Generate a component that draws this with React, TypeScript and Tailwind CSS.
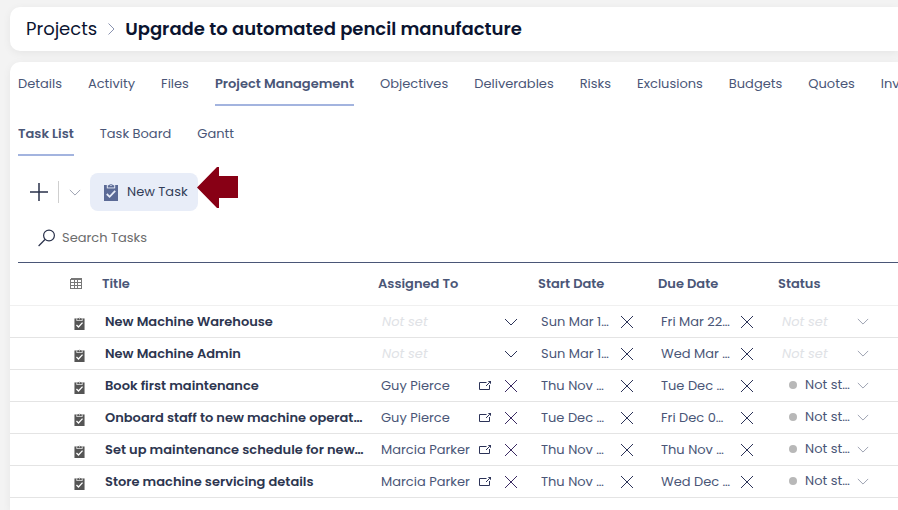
import React from "react";

type IconProps = { className?: string };

const ChevronDown = ({ className = "" }: IconProps) => (
  <svg viewBox="0 0 14 8" className={className} fill="none" stroke="currentColor" aria-hidden="true">
    <path d="M1 1l6 6 6-6" />
  </svg>
);

const Cross = ({ className = "" }: IconProps) => (
  <svg viewBox="0 0 14 14" className={className} fill="none" stroke="currentColor" aria-hidden="true">
    <path d="M1 1l12 12M13 1L1 13" />
  </svg>
);

const OpenOut = ({ className = "" }: IconProps) => (
  <svg viewBox="0 0 14 12" className={className} fill="none" stroke="currentColor" aria-hidden="true">
    <path d="M8.500 2.500h-7v7h10V5" />
    <path d="M8 6l3.500-3.500" />
    <path d="M9.800 1H13v3.200z" fill="currentColor" stroke="none" />
  </svg>
);

const Clipboard = ({ className = "", paper = "white" }: IconProps & { paper?: string }) => (
  <svg viewBox="0 0 14 18" className={className} aria-hidden="true">
    <path fill="currentColor" d="M0 2h14v16H0z" />
    <path fill={paper} d="M2.800 2h8.400v3.400H2.800z" />
    <path fill="currentColor" fillRule="evenodd" d="M3.800 4.500V2.200h1.400a1.900 1.900 0 0 1 3.600 0h1.400v2.300zM7 1.500a.8.8 0 1 0 0 1.600.8.8 0 0 0 0-1.600z" />
    <path fill="none" stroke={paper} strokeWidth="1.800" d="M2.800 11l2.800 2.800 5.600-6" />
  </svg>
);

const Grid = ({ className = "" }: IconProps) => (
  <svg viewBox="0 0 12 11" className={className} fill="none" stroke="currentColor" shapeRendering="crispEdges" aria-hidden="true">
    <path d="M.5 1.500h11M.5 4.500h11M.5 7.500h11M.5 10.500h11M.5.5v10M4.500 1v10M7.500 1v10M11.500.5v10M.5.5h11" />
  </svg>
);

const tabs = [
  "Details",
  "Activity",
  "Files",
  "Project Management",
  "Objectives",
  "Deliverables",
  "Risks",
  "Exclusions",
  "Budgets",
  "Quotes",
  "Invoices",
];
const views = ["Task List", "Task Board", "Gantt"];

type Task = { title: string; person?: string; start: string; due: string; status?: string };

const tasks: Task[] = [
  { title: "New Machine Warehouse", start: "Sun Mar 1…", due: "Fri Mar 22…" },
  { title: "New Machine Admin", start: "Sun Mar 1…", due: "Wed Mar …" },
  { title: "Book first maintenance", person: "Guy Pierce", start: "Thu Nov …", due: "Tue Dec …", status: "Not st…" },
  { title: "Onboard staff to new machine operat…", person: "Guy Pierce", start: "Tue Dec …", due: "Fri Dec 0…", status: "Not st…" },
  { title: "Set up maintenance schedule for new…", person: "Marcia Parker", start: "Thu Nov …", due: "Thu Nov …", status: "Not st…" },
  { title: "Store machine servicing details", person: "Marcia Parker", start: "Thu Nov …", due: "Wed Dec …", status: "Not st…" },
];

function Tabs({ items, active, label }: { items: string[]; active: string; label: string }) {
  return (
    <nav aria-label={label} className="flex h-11 gap-[26px] overflow-hidden">
      {items.map((item) => (
        <a
          key={item}
          href="#"
          aria-current={item === active ? "page" : undefined}
          className={
            item === active
              ? "flex shrink-0 items-center border-b-2 border-[#a3b4df] pt-0.5 font-semibold"
              : "flex shrink-0 items-center border-b-2 border-transparent pt-0.5"
          }
        >
          {item}
        </a>
      ))}
    </nav>
  );
}

function DateCell({ value, label }: { value: string; label: string }) {
  return (
    <td className="pl-[7px] pt-px">
      <div className="flex items-center">
        <span className="w-[79px] whitespace-nowrap">{value}</span>
        <button aria-label={label} className="text-[#2c3358]">
          <Cross className="h-3.5 w-3.5" />
        </button>
      </div>
    </td>
  );
}

function PersonCell({ person, task }: { person?: string; task: string }) {
  if (!person) {
    return (
      <td className="pl-[7px] pt-px">
        <div className="relative flex w-[137px] items-center">
          <select aria-label={`Assignee of ${task}`} className="w-full appearance-none pl-px italic text-[#e0e2e6]">
            <option>Not set</option>
          </select>
          <ChevronDown className="pointer-events-none absolute right-0 h-2 w-3.5 text-[#2c3358]" />
        </div>
      </td>
    );
  }
  return (
    <td className="pl-[7px] pt-px">
      <div className="flex w-[137px] items-center">
        <span className="flex-1 whitespace-nowrap">{person}</span>
        <button aria-label={`Open ${person}`} className="mr-3 text-[#2c3358]">
          <OpenOut className="h-3 w-3.5" />
        </button>
        <button aria-label={`Remove ${person}`} className="text-[#3a2a62]">
          <Cross className="h-3.5 w-3.5" />
        </button>
      </div>
    </td>
  );
}

function StatusCell({ status, task }: { status?: string; task: string }) {
  return (
    <td className={status ? "pl-[7px]" : "pl-[7px] pt-px"}>
      <div className="relative flex w-[88px] items-center">
        {status && <span className="ml-2 h-2 w-2 shrink-0 rounded-full bg-[#b8b8b8]" />}
        <select
          aria-label={`Status of ${task}`}
          className={status ? "ml-2 w-full appearance-none" : "w-full appearance-none pl-px italic text-[#e0e2e6]"}
        >
          <option>{status ?? "Not set"}</option>
        </select>
        <ChevronDown className="pointer-events-none absolute right-0 h-[7px] w-3 text-[#8d93a5]" />
      </div>
    </td>
  );
}

export default function App() {
  return (
    <div className="flex min-h-screen flex-col gap-[11px] overflow-hidden bg-[#f3f3f3] pl-2.5 pt-[7px] font-['Poppins','Inter',sans-serif] text-[13px] leading-5 text-[#4a5677]">
      <header className="flex h-11 items-center rounded-l-[10px] bg-white pl-4 text-lg text-[#0b1430] shadow-[0_2px_8px_rgba(0,0,0,0.06)]">
        <a href="#">Projects</a>
        <svg viewBox="0 0 7 12" className="ml-[11px] mr-2.5 h-3 w-[7px] text-[#8a93b0]" fill="none" stroke="currentColor" aria-hidden="true">
          <path d="M.5.5L6 6 .5 11.500" />
        </svg>
        <h1 className="whitespace-nowrap font-semibold">Upgrade to automated pencil manufacture</h1>
      </header>

      <main className="flex-1 rounded-tl-[10px] bg-white shadow-[0_2px_8px_rgba(0,0,0,0.06)]">
        <div className="pl-2">
          <Tabs items={tabs} active="Project Management" label="Project sections" />
          <div className="mt-1.5">
            <Tabs items={views} active="Task List" label="Task views" />
          </div>

          <div className="mt-[17px] flex h-[38px] items-center pl-3">
            <button aria-label="Add" className="text-[#28304a]">
              <svg viewBox="0 0 18 18" className="h-[18px] w-[18px]" fill="none" stroke="currentColor" strokeWidth="1.500">
                <path d="M9 0v18M0 9h18" />
              </svg>
            </button>
            <span className="ml-2.5 h-[22px] w-px bg-[#cfcfcf]" />
            <button aria-label="More add options" className="ml-2.5 text-[#8d93a5]">
              <ChevronDown className="h-[7px] w-3" />
            </button>
            <div className="relative ml-[9px]">
              <button className="flex h-[38px] w-[108px] items-center gap-[9px] whitespace-nowrap rounded-lg bg-[#e8edf8] pl-3.5 text-[#333d59]">
                <Clipboard className="h-[18px] w-3.5 text-[#5b6a96]" paper="#e8edf8" />
                New Task
              </button>
              <svg viewBox="0 0 41 41" className="absolute -top-1.5 left-full -ml-px h-[41px] w-[41px]" fill="#880015" aria-hidden="true">
                <path d="M0 20.500L20 0h2v9h19v22H22v10h-2z" />
              </svg>
            </div>
          </div>

          <div className="mt-[11px] flex h-[41px] border-b border-[#4a5677] pb-2 pl-5">
            <label htmlFor="task-search" className="flex items-center text-[#28304a]" aria-label="Search tasks">
              <svg viewBox="0 0 18 18" className="h-[18px] w-[18px]" fill="none" stroke="currentColor" strokeWidth="1.200">
                <circle cx="11" cy="6.500" r="5.400" />
                <path d="M7 10.500L.6 17" />
              </svg>
            </label>
            <input
              id="task-search"
              type="search"
              placeholder="Search Tasks"
              className="ml-1.5 flex-1 outline-none placeholder:text-[#6c6c6c]"
            />
          </div>
        </div>

        <table className="w-full table-fixed border-collapse text-left">
          <colgroup>
            <col className="w-[88px]" />
            <col className="w-[276px]" />
            <col className="w-40" />
            <col className="w-[120px]" />
            <col className="w-[120px]" />
            <col />
          </colgroup>
          <thead>
            <tr className="h-[42px] border-b border-[#f0f0f0]">
              <th scope="col" className="pl-[60px]" aria-label="Type">
                <Grid className="h-[11px] w-3 text-[#777777]" />
              </th>
              {["Title", "Assigned To", "Start Date", "Due Date", "Status"].map((name) => (
                <th key={name} scope="col" className="pl-1 pt-px font-semibold">
                  {name}
                </th>
              ))}
            </tr>
          </thead>
          <tbody>
            {tasks.map((task) => (
              <tr key={task.title} className="h-8 border-b border-[#e4e4e4]">
                <td className="pl-16 pt-1">
                  <Clipboard className="h-[13px] w-[11px] text-[#555555]" />
                </td>
                <td className="whitespace-nowrap pl-[7px] pt-px font-semibold text-[#2d3650]">{task.title}</td>
                <PersonCell person={task.person} task={task.title} />
                <DateCell value={task.start} label={`Clear start date of ${task.title}`} />
                <DateCell value={task.due} label={`Clear due date of ${task.title}`} />
                <StatusCell status={task.status} task={task.title} />
              </tr>
            ))}
          </tbody>
        </table>
      </main>
    </div>
  );
}
